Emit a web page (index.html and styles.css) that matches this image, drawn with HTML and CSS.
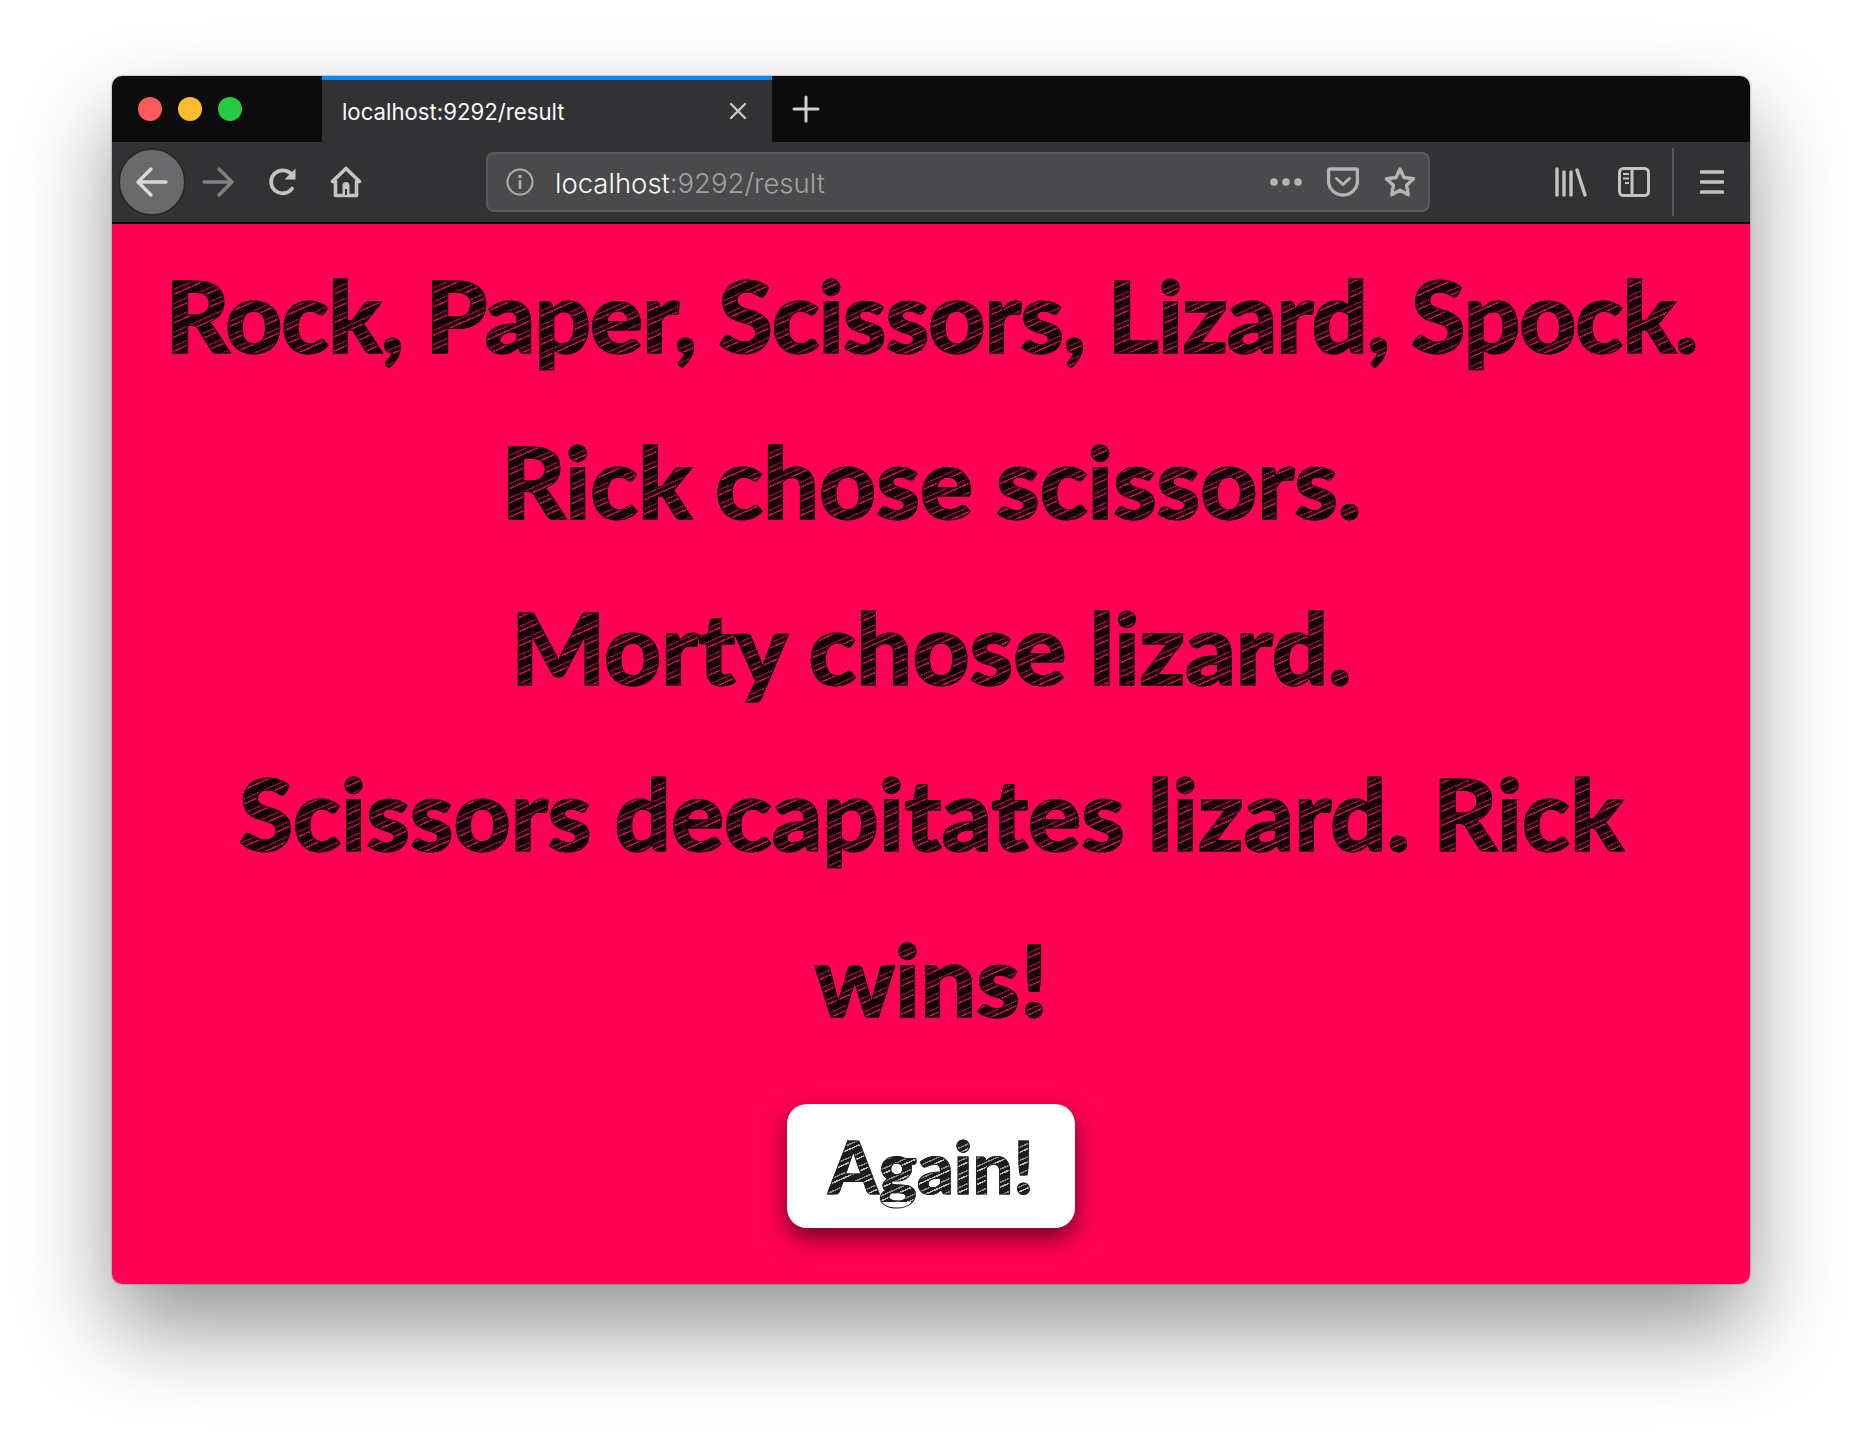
FILE: index.html
```html
<!DOCTYPE html>
<html lang="en">
<head>
<meta charset="utf-8">
<title>Rock, Paper, Scissors, Lizard, Spock</title>
<link rel="stylesheet" href="styles.css">
</head>
<body>
<div class="window">
  <div class="tabbar">
    <div class="lights">
      <span class="light red"></span><span class="light yellow"></span><span class="light green"></span>
    </div>
    <div class="tab">
      <span class="tab-title">localhost:9292/result</span>
      <svg class="tab-close" width="18" height="18" viewBox="0 0 18 18"><path d="M2 2L16 16M16 2L2 16" stroke="#c8c8c8" stroke-width="2.4" stroke-linecap="round"/></svg>
    </div>
    <svg class="new-tab" width="30" height="30" viewBox="0 0 30 30"><path d="M15 3V27M3 15H27" stroke="#d0d0d0" stroke-width="3" stroke-linecap="round"/></svg>
  </div>
  <div class="toolbar">
    <div class="back">
      <svg width="34" height="32" viewBox="0 0 34 32"><path d="M31 16H4M16 3L3 16L16 29" fill="none" stroke="#d8d8d8" stroke-width="3.4" stroke-linecap="round" stroke-linejoin="round"/></svg>
    </div>
    <svg class="forward" width="34" height="32" viewBox="0 0 34 32"><path d="M3 16H30M18 3L31 16L18 29" fill="none" stroke="#808082" stroke-width="3.4" stroke-linecap="round" stroke-linejoin="round"/></svg>
    <svg class="reload" width="32" height="32" viewBox="0 0 32 32"><path d="M25 22.5A11.5 11.5 0 1 1 24.5 8.500" fill="none" stroke="#c4c4c4" stroke-width="3.8" stroke-linecap="round"/><path d="M28.500 2.500V13.500H17.500" fill="#c4c4c4"/></svg>
    <svg class="home" width="32" height="32" viewBox="0 0 32 32"><path d="M2.500 15.500L16 2.500L29.500 15.500L26.500 15.500V29.500H5.500V15.500Z" fill="none" stroke="#c4c4c4" stroke-width="3.600" stroke-linejoin="round"/><path d="M12.500 30V19.500A3.500 3.500 0 0 1 19.500 19.500V30Z" fill="#c4c4c4"/><rect x="15" y="23" width="2" height="6" fill="#38383a"/></svg>
    <div class="urlbar">
      <svg class="info" width="28" height="28" viewBox="0 0 28 28"><circle cx="14" cy="14" r="12.500" fill="none" stroke="#b0b0b2" stroke-width="2"/><circle cx="14" cy="8.500" r="1.800" fill="#b0b0b2"/><rect x="12.700" y="12" width="2.600" height="9" rx="1" fill="#b0b0b2"/></svg>
      <span class="url"><span class="url-host">localhost</span>:9292/result</span>
      <svg class="dots" width="32" height="8" viewBox="0 0 32 8"><circle cx="4" cy="4" r="3.800" fill="#b4b4b6"/><circle cx="16" cy="4" r="3.800" fill="#b4b4b6"/><circle cx="28" cy="4" r="3.800" fill="#b4b4b6"/></svg>
      <svg class="pocket" width="32" height="30" viewBox="0 0 32 30"><path d="M3 2H29A1.500 1.500 0 0 1 30.500 3.500V14A14.500 14 0 0 1 1.500 14V3.500A1.500 1.500 0 0 1 3 2Z" fill="none" stroke="#b4b4b6" stroke-width="3.400"/><path d="M9.500 11.500L16 17.500L22.500 11.500" fill="none" stroke="#b4b4b6" stroke-width="3" stroke-linecap="round" stroke-linejoin="round"/></svg>
      <svg class="star" width="32" height="32" viewBox="0 0 32 32"><path d="M16 3L20 11.500L29.500 12.800L22.600 19.300L24.300 28.800L16 24.200L7.700 28.800L9.400 19.300L2.500 12.800L12 11.500Z" fill="none" stroke="#b4b4b6" stroke-width="3.400" stroke-linejoin="round"/></svg>
    </div>
    <svg class="library" width="32" height="30" viewBox="0 0 32 30"><path d="M2 2V28M9 5V28M16 5V28M22 3L30 28" fill="none" stroke="#c4c4c4" stroke-width="3.400" stroke-linecap="round"/></svg>
    <svg class="sidebar" width="32" height="30" viewBox="0 0 32 30"><rect x="1.500" y="1.500" width="29" height="27" rx="4" fill="none" stroke="#c4c4c4" stroke-width="3"/><path d="M14 2V28" stroke="#c4c4c4" stroke-width="3"/><path d="M5 7H11M5 11.500H11M7 16H11" stroke="#c4c4c4" stroke-width="2"/></svg>
    <span class="divider"></span>
    <svg class="menu" width="24" height="24" viewBox="0 0 24 24"><path d="M1.500 2H22.500M1.500 12H22.500M1.500 22H22.500" stroke="#c4c4c4" stroke-width="3.600" stroke-linecap="round"/></svg>
  </div>
  <main class="page">
    <div class="lines">
      <h1 class="line line-tight"><span class="sketch">Rock, Paper, Scissors, Lizard, Spock.</span></h1>
      <h1 class="line"><span class="sketch">Rick chose scissors.</span></h1>
      <h1 class="line"><span class="sketch">Morty chose lizard.</span></h1>
      <h1 class="line"><span class="sketch">Scissors decapitates lizard. Rick wins!</span></h1>
    </div>
    <a class="again" href="#"><span class="sketch-btn">Again!</span></a>
  </main>
</div>
</body>
</html>
```
FILE: styles.css
```css
* { box-sizing: border-box; }
html, body { margin: 0; height: 100%; }
body {
  background: #fff;
  padding: 76px 112px 148px;
  overflow: hidden;
  font-family: "Inter", "Liberation Sans", sans-serif;
}
.window {
  height: 1208px;
  display: flex;
  flex-direction: column;
  border-radius: 10px;
  overflow: hidden;
  box-shadow: 0 44px 90px rgba(0,0,0,.42), 0 0 2px rgba(0,0,0,.5);
}
.tabbar {
  height: 66px;
  flex: none;
  display: flex;
  align-items: stretch;
  background: #0c0c0d;
}
.lights {
  width: 210px;
  padding-left: 26px;
  display: flex;
  align-items: center;
  gap: 16px;
  margin-top: -1px;
}
.light { width: 24px; height: 24px; border-radius: 50%; }
.red { background: #fc5b57; }
.yellow { background: #fdbb2f; }
.green { background: #29c940; }
.tab {
  width: 450px;
  background: #323234;
  border-top: 4px solid #0a84ff;
  display: flex;
  align-items: center;
  padding: 0 25px 0 20px;
  justify-content: space-between;
}
.tab-title { color: #f9f9fa; font-size: 22.200px; white-space: nowrap; }
.new-tab { align-self: center; margin-left: 19px; margin-top: -1px; }
.toolbar {
  height: 82px;
  flex: none;
  display: flex;
  align-items: center;
  background: #323234;
  border-bottom: 2px solid #0c0c0d;
  padding: 0 0 0 6px;
}
.back {
  width: 68px;
  height: 68px;
  border-radius: 50%;
  background: #6a6a6c;
  border: 2px solid #2a2a2c;
  display: flex;
  align-items: center;
  justify-content: center;
  flex: none;
}
.back svg { margin-left: -1px; }
.forward { margin-left: 15px; flex: none; }
.reload { margin-left: 32px; flex: none; }
.home { margin-left: 31px; flex: none; }
.urlbar {
  margin-left: 124px;
  width: 944px;
  height: 60px;
  flex: none;
  background: #4a4a4c;
  border: 2px solid #5a5a5c;
  border-radius: 8px;
  display: flex;
  align-items: center;
  padding-left: 18px;
}
.url {
  margin-left: 21px;
  padding-top: 2px;
  font-size: 27.500px;
  color: #a0a0a2;
  white-space: nowrap;
  flex: 1;
  font-weight: 300;
}
.url-host { color: #f9f9fa; }
.dots { flex: none; margin-right: 25px; }
.pocket { flex: none; margin-right: 25px; }
.star { flex: none; margin-right: 12px; }
.library { flex: none; margin-left: 125px; }
.sidebar { flex: none; margin-left: 31px; }
.divider {
  width: 2px;
  height: 68px;
  background: #5a5a5c;
  margin-left: 22px;
  flex: none;
}
.menu { flex: none; margin-left: 26px; }
.page {
  flex: 1;
  background: #ff0054;
  padding-top: 7px;
  display: flex;
  flex-direction: column;
  align-items: center;
}
.lines { width: 1580px; }
.line {
  margin: 0;
  text-align: center;
  font-family: "Lato", "Liberation Sans", sans-serif;
  font-weight: 900;
  font-size: 100px;
  line-height: 166px;
  letter-spacing: -.6px;
}
.line-tight { letter-spacing: -1.6px; }
.sketch, .sketch-btn {
  color: transparent;
  -webkit-background-clip: text;
  background-clip: text;
}
.sketch {
  -webkit-text-stroke: 1px #0a0005;
  background-color: #12000a;
  background-image:
    repeating-linear-gradient(-24deg, transparent 0 2.500px, #c8084a 2.500px 4px, transparent 4px 7px, #8e0638 7px 8.500px, transparent 8.500px 13px);
}
.sketch-btn {
  -webkit-text-stroke: 1px #222;
  background-color: #1c1c1c;
  background-image:
    repeating-linear-gradient(-24deg, transparent 0 2.500px, #bdbdbd 2.500px 4px, transparent 4px 7px, #8a8a8a 7px 8.500px, transparent 8.500px 12px);
  font-family: "Lato", "Liberation Sans", sans-serif;
  font-weight: 900;
  font-size: 72px;
  line-height: 1;
}
.again {
  margin-top: 43px;
  width: 288px;
  height: 124px;
  flex: none;
  background: #fff;
  border-radius: 20px;
  box-shadow: 0 10px 22px rgba(0,0,0,.55);
  display: flex;
  align-items: center;
  justify-content: center;
  text-decoration: none;
}
```
